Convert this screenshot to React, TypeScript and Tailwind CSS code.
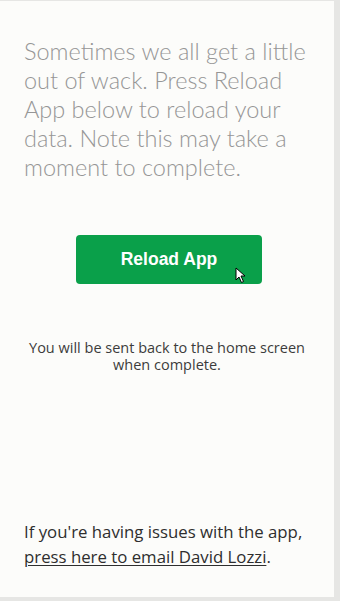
import React from "react";

export default function App() {
  return (
    <div className="h-[601px] w-[340px] bg-[#e6e6e4] pt-px pr-[6px] pb-[4px]">
      <div className="flex h-full flex-col bg-[#fcfcfa] px-6">
        {/* Intro copy */}
        <p
          className="mt-[36px] text-[23.5px] font-light leading-[29px] text-[#969696]"
          style={{ fontFamily: "Lato, sans-serif" }}
        >
          Sometimes we all get a little out of wack. Press Reload App below to reload your data. Note this may take a moment to complete.
        </p>

        <div className="relative mt-[53px] flex justify-center pl-1">
          <button
            className="h-[49px] w-[186px] rounded-[4px] bg-[#0aa04a] text-[17.5px] font-bold text-white"
            style={{ fontFamily: "'Liberation Sans', Arial, sans-serif" }}
          >
            Reload App
          </button>
          {/* mouse pointer */}
          <svg
            className="absolute left-[211px] top-[32px]"
            width="11"
            height="17"
            viewBox="0 0 11 17"
          >
            <path
              d="M1 1 L1 13 L4 10 L6.5 15.5 L8.5 14.5 L6 9 L10 9 Z"
              fill="#fff"
              stroke="#000"
              strokeWidth="1"
              strokeLinejoin="round"
            />
          </svg>
        </div>

        <p
          className="mt-[55px] -mx-2 text-center text-[14.5px] leading-[17px] text-[#3c3c3c]"
          style={{ fontFamily: "'Open Sans', sans-serif" }}
        >
          You will be sent back to the home screen when complete.
        </p>

        <p
          className="mt-auto mb-[28px] text-[16.8px] leading-[25px] text-[#2e2e2e]"
          style={{ fontFamily: "'Open Sans', sans-serif" }}
        >
          If you're having issues with the app,{" "}
          <a href="#" className="underline underline-offset-2">
            press here to email David Lozzi
          </a>
          .
        </p>
      </div>
    </div>
  );
}
